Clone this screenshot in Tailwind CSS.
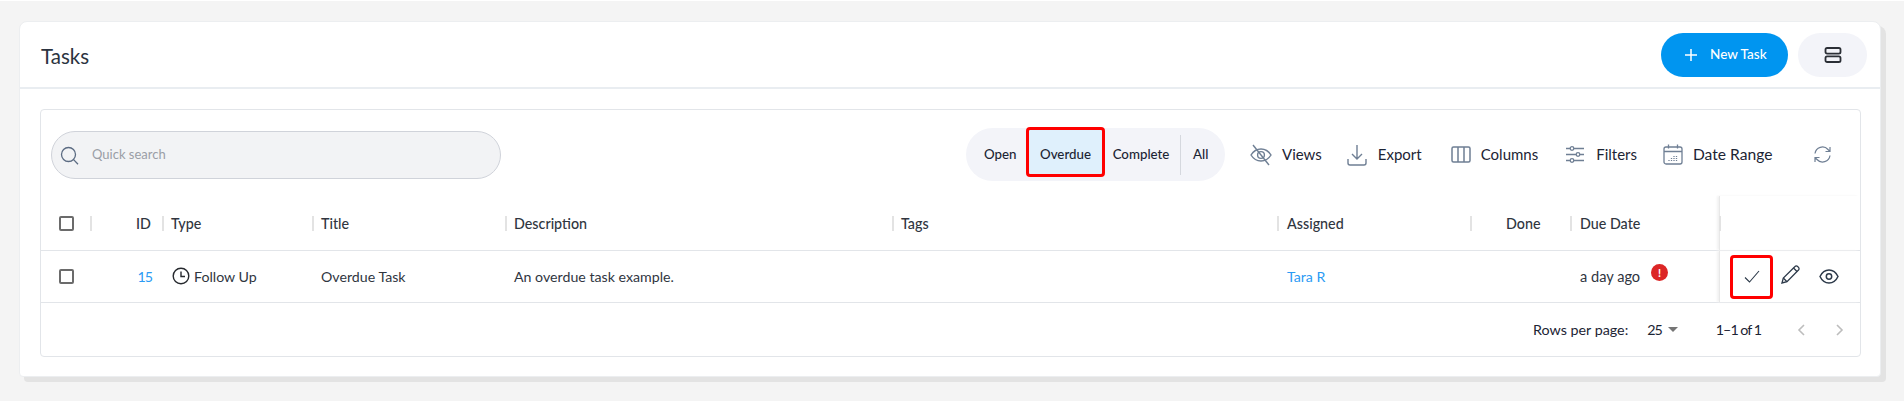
<!DOCTYPE html>
<html lang="en">

<head>
    <meta charset="UTF-8">
    <meta name="viewport" content="width=device-width, initial-scale=1.0">
    <title>Tasks</title>
    <script src="https://cdn.jsdelivr.net/npm/@tailwindcss/browser@4"></script>
</head>

<body class="bg-[#f4f4f4] font-['Lato',sans-serif] text-[#1c2434]">
    <div class="h-[401px] w-[1904px] overflow-hidden border-t border-white pt-[20px] pl-[19px]">
        <div class="w-[1862px] h-[356px] bg-white rounded-t-lg rounded-b-sm border border-[#eceef0] shadow-[5px_5px_0_#e3e3e3] flex flex-col">

            <!-- card header -->
            <div class="h-[67px] shrink-0 border-b-2 border-[#e9edf1] flex items-center pl-[21px] pr-[13px]">
                <h1 class="mt-[3px] text-[20.5px] text-[#2b3340]">Tasks</h1>
                <button class="ml-auto w-[127px] h-[44px] rounded-full bg-[#0095f0] text-white flex items-center pl-[24px] gap-[13px] text-[13.5px] font-medium">
                    <svg class="w-[12px] h-[12px]" viewBox="0 0 12 12" fill="none" stroke="currentColor" stroke-width="1.5"><path d="M6 0v12M0 6h12"/></svg>
                    New Task
                </button>
                <button class="ml-[10px] w-[69px] h-[44px] rounded-full bg-[#f3f4f9] flex items-center justify-center">
                    <svg class="w-[18px] h-[18px]" viewBox="0 0 18 18" fill="none" stroke="#2b2f36" stroke-width="1.8"><rect x="1.5" y="2" width="15" height="5.6" rx="1.6"/><rect x="1.5" y="10.4" width="15" height="5.6" rx="1.6"/></svg>
                </button>
            </div>

            <!-- table box -->
            <div class="ml-[20px] mr-[19px] mt-[20px] h-[248px] rounded border border-[#e2e5e9] flex flex-col">

                <!-- toolbar -->
                <div class="h-[91px] shrink-0 flex items-start pt-[18px] pl-[10px] text-[15px]">
                    <div class="w-[450px] h-[48px] mt-[3px] rounded-full bg-[#f2f3f5] border border-[#d0d3da] flex items-center pl-[8px] gap-[13px] text-[#9a9ea6] text-[13px]">
                        <svg class="w-[19px] h-[19px]" viewBox="0 0 19 19" fill="none" stroke="#5b6b82" stroke-width="1.3"><circle cx="8.5" cy="8.5" r="7"/><path d="M13.6 13.6l4.400 4.600"/></svg>
                        Quick search
                    </div>

                    <div class="ml-[465px] w-[259px] h-[53px] rounded-full bg-[#f3f4f9] flex items-center text-[13.3px] font-medium">
                        <span class="w-[60px] pl-[18px]">Open</span>
                        <span class="w-[79px] h-[50px] -mt-[5px] pt-[6px] border-[3px] border-[#ff0000] rounded-sm bg-[#dff0fc] flex items-center justify-center">Overdue</span>
                        <span class="w-[76px] h-[40px] pr-[3px] flex items-center justify-center border-r border-[#d5d8de]">Complete</span>
                        <span class="pl-[12px]">All</span>
                    </div>

                    <div class="ml-[25px] h-[53px] flex items-center">
                        <svg class="w-[22px] h-[22px]" viewBox="0 0 22 22" fill="none" stroke="#6f7f94" stroke-width="1.4"><path d="M1 11c2.500-4 5.800-6 10-6s7.500 2 10 6c-2.500 4-5.800 6-10 6s-7.500-2-10-6z"/><circle cx="11" cy="11" r="3.400"/><path d="M3 1l16 20"/></svg>
                        <span class="ml-[10px]">Views</span>
                        <svg class="ml-[25px] w-[20px] h-[22px]" viewBox="0 0 20 22" fill="none" stroke="#6f7f94" stroke-width="1.400"><path d="M10 1v14M5 10l5 5 5-5"/><path d="M1 15v4a2 2 0 0 0 2 2h14a2 2 0 0 0 2-2v-4"/></svg>
                        <span class="ml-[11px]">Export</span>
                        <svg class="ml-[29px] w-[20px] h-[17px]" viewBox="0 0 20 17" fill="none" stroke="#6f7f94" stroke-width="1.500"><rect x="1" y="1" width="18" height="15" rx="1.500"/><path d="M7 1v15M13 1v15"/></svg>
                        <span class="ml-[10px]">Columns</span>
                        <svg class="ml-[28px] w-[18px] h-[17px]" viewBox="0 0 18 17" fill="none" stroke="#6f7f94" stroke-width="1.300"><path d="M0 2.500h4M8 2.500h10M0 8.500h10M14 8.500h4M0 14.500h4M8 14.500h10"/><circle cx="6" cy="2.500" r="1.800"/><circle cx="12" cy="8.500" r="1.800"/><circle cx="6" cy="14.500" r="1.800"/></svg>
                        <span class="ml-[12px]">Filters</span>
                        <svg class="ml-[26px] w-[20px] h-[21px]" viewBox="0 0 20 21" fill="none" stroke="#6f7f94" stroke-width="1.300"><rect x="1" y="3" width="18" height="17" rx="2"/><path d="M1 7.500h18M5.500 0.500v4M14.500 0.500v4"/><path d="M6 16v1M8.500 14v3M11 12v5M13.500 12v5" stroke-dasharray="1 1"/></svg>
                        <span class="ml-[10px] text-[15.6px]">Date Range</span>
                        <svg class="ml-[42px] w-[17px] h-[17px]" viewBox="0 0 17 17" fill="none" stroke="#6f7f94" stroke-width="1.200"><path d="M1 7.500A7.500 7.500 0 0 1 14 3.500l2 2M16 1v4.500h-4.500"/><path d="M16 9.500A7.500 7.500 0 0 1 3 13.500l-2-2M1 16v-4.500h4.500"/></svg>
                    </div>
                </div>

                <!-- header row -->
                <div class="h-[50px] shrink-0 pb-[4px] border-b border-[#e2e5e9] grid grid-cols-[51px_70px_150px_193px_387px_385px_193px_100px_149px_140px] items-center text-[14.3px] font-medium text-[#30363f]">
                    <div class="flex items-center justify-between pl-[18px]">
                        <span class="w-[15px] h-[15px] rounded-[2px] border-2 border-[#6b6b6b]"></span>
                        <span class="w-[2px] h-[15px] bg-[#e3e3e3]"></span>
                    </div>
                    <div class="text-right pr-[11px]">ID</div>
                    <div class="flex items-center gap-[7px]"><span class="w-[2px] h-[15px] bg-[#e3e3e3]"></span>Type</div>
                    <div class="flex items-center gap-[7px]"><span class="w-[2px] h-[15px] bg-[#e3e3e3]"></span>Title</div>
                    <div class="flex items-center gap-[7px]"><span class="w-[2px] h-[15px] bg-[#e3e3e3]"></span>Description</div>
                    <div class="flex items-center gap-[7px]"><span class="w-[2px] h-[15px] bg-[#e3e3e3]"></span>Tags</div>
                    <div class="flex items-center gap-[8px]"><span class="w-[2px] h-[15px] bg-[#e3e3e3]"></span>Assigned</div>
                    <div class="flex items-center"><span class="w-[2px] h-[15px] bg-[#e3e3e3]"></span><span class="ml-[34px]">Done</span></div>
                    <div class="flex items-center gap-[8px]"><span class="w-[2px] h-[15px] bg-[#e3e3e3]"></span>Due Date</div>
                    <div class="self-stretch -mt-[5px] -mb-[4px] border-l border-[#e8e8e8] shadow-[-2px_0_2px_#f2f2f2] flex items-center"><span class="w-[2px] h-[15px] bg-[#e3e3e3] -ml-px"></span></div>
                </div>

                <!-- task row -->
                <div class="h-[52px] shrink-0 border-b border-[#e2e5e9] grid grid-cols-[51px_70px_150px_193px_387px_385px_193px_100px_149px_140px] items-center text-[14.2px] text-[#30363f]">
                    <div class="pl-[18px]"><span class="block w-[15px] h-[15px] rounded-[2px] border-2 border-[#6b6b6b]"></span></div>
                    <div class="text-right pr-[10px] text-[#2b9bf4] tracking-[-1px]">15</div>
                    <div class="flex items-center gap-[4px] pl-[10px]">
                        <svg class="w-[18px] h-[18px] shrink-0" viewBox="0 0 18 18" fill="none" stroke="#26292e" stroke-width="1.400"><circle cx="9" cy="9" r="7.800"/><path d="M9 4.500V9.500h4"/></svg>
                        Follow Up
                    </div>
                    <div class="pl-[9px]">Overdue Task</div>
                    <div class="pl-[9px]">An overdue task example.</div>
                    <div></div>
                    <div class="pl-[10px] text-[#2b9bf4]">Tara R</div>
                    <div></div>
                    <div class="flex items-center pl-[10px] text-[14.6px]">
                        a day ago
                        <span class="ml-[11px] -mt-[7px] w-[17px] h-[17px] rounded-full bg-[#dc2626] text-white text-[11px] font-bold flex items-center justify-center">!</span>
                    </div>
                    <div class="h-full border-l border-[#e8e8e8] shadow-[-2px_0_2px_#f2f2f2] flex items-center pl-[10px]">
                        <button class="w-[43px] h-[44px] border-[3px] border-[#ff0000] rounded-sm flex items-center justify-center">
                            <svg class="w-[16px] h-[13px]" viewBox="0 0 16 13" fill="none" stroke="#2d3a4a" stroke-width="1.100"><path d="M1 7.500l4.500 4.500L15 1"/></svg>
                        </button>
                        <svg class="ml-[8px] -mt-[4px] w-[19px] h-[19px]" viewBox="0 0 19 19" fill="none" stroke="#2d3a4a" stroke-width="1.300"><path d="M1 18l1.300-5L14 1.500a1.800 1.800 0 0 1 2.600 0l.9.900a1.800 1.800 0 0 1 0 2.600L6 16.700z"/><path d="M12.500 3l3.500 3.500M2.300 13L6 16.700"/></svg>
                        <svg class="ml-[19px] w-[20px] h-[15px]" viewBox="0 0 20 15" fill="none" stroke="#2d3a4a" stroke-width="1.500"><path d="M1 7.500C3 3.300 6 1 10 1s7 2.300 9 6.500c-2 4.200-5 6.500-9 6.500S3 11.700 1 7.500z"/><circle cx="10" cy="7.500" r="2.700"/></svg>
                    </div>
                </div>

                <!-- pagination -->
                <div class="flex-1 flex items-center justify-end text-[14.3px] pr-[16px]">
                    <span>Rows per page:</span>
                    <span class="ml-[19px] tracking-[-1px]">25</span>
                    <svg class="ml-[6px] w-[10px] h-[5px]" viewBox="0 0 10 5" fill="#757575"><path d="M0 0h10L5 5z"/></svg>
                    <span class="ml-[38px] tracking-[-1px]">1–1 of 1</span>
                    <svg class="ml-[36px] w-[8px] h-[12px]" viewBox="0 0 8 12" fill="none" stroke="#bdbdbd" stroke-width="1.600"><path d="M7 1L2 6l5 5"/></svg>
                    <svg class="ml-[31px] w-[8px] h-[12px]" viewBox="0 0 8 12" fill="none" stroke="#bdbdbd" stroke-width="1.600"><path d="M1 1l5 5-5 5"/></svg>
                </div>
            </div>
        </div>
    </div>
</body>

</html>
